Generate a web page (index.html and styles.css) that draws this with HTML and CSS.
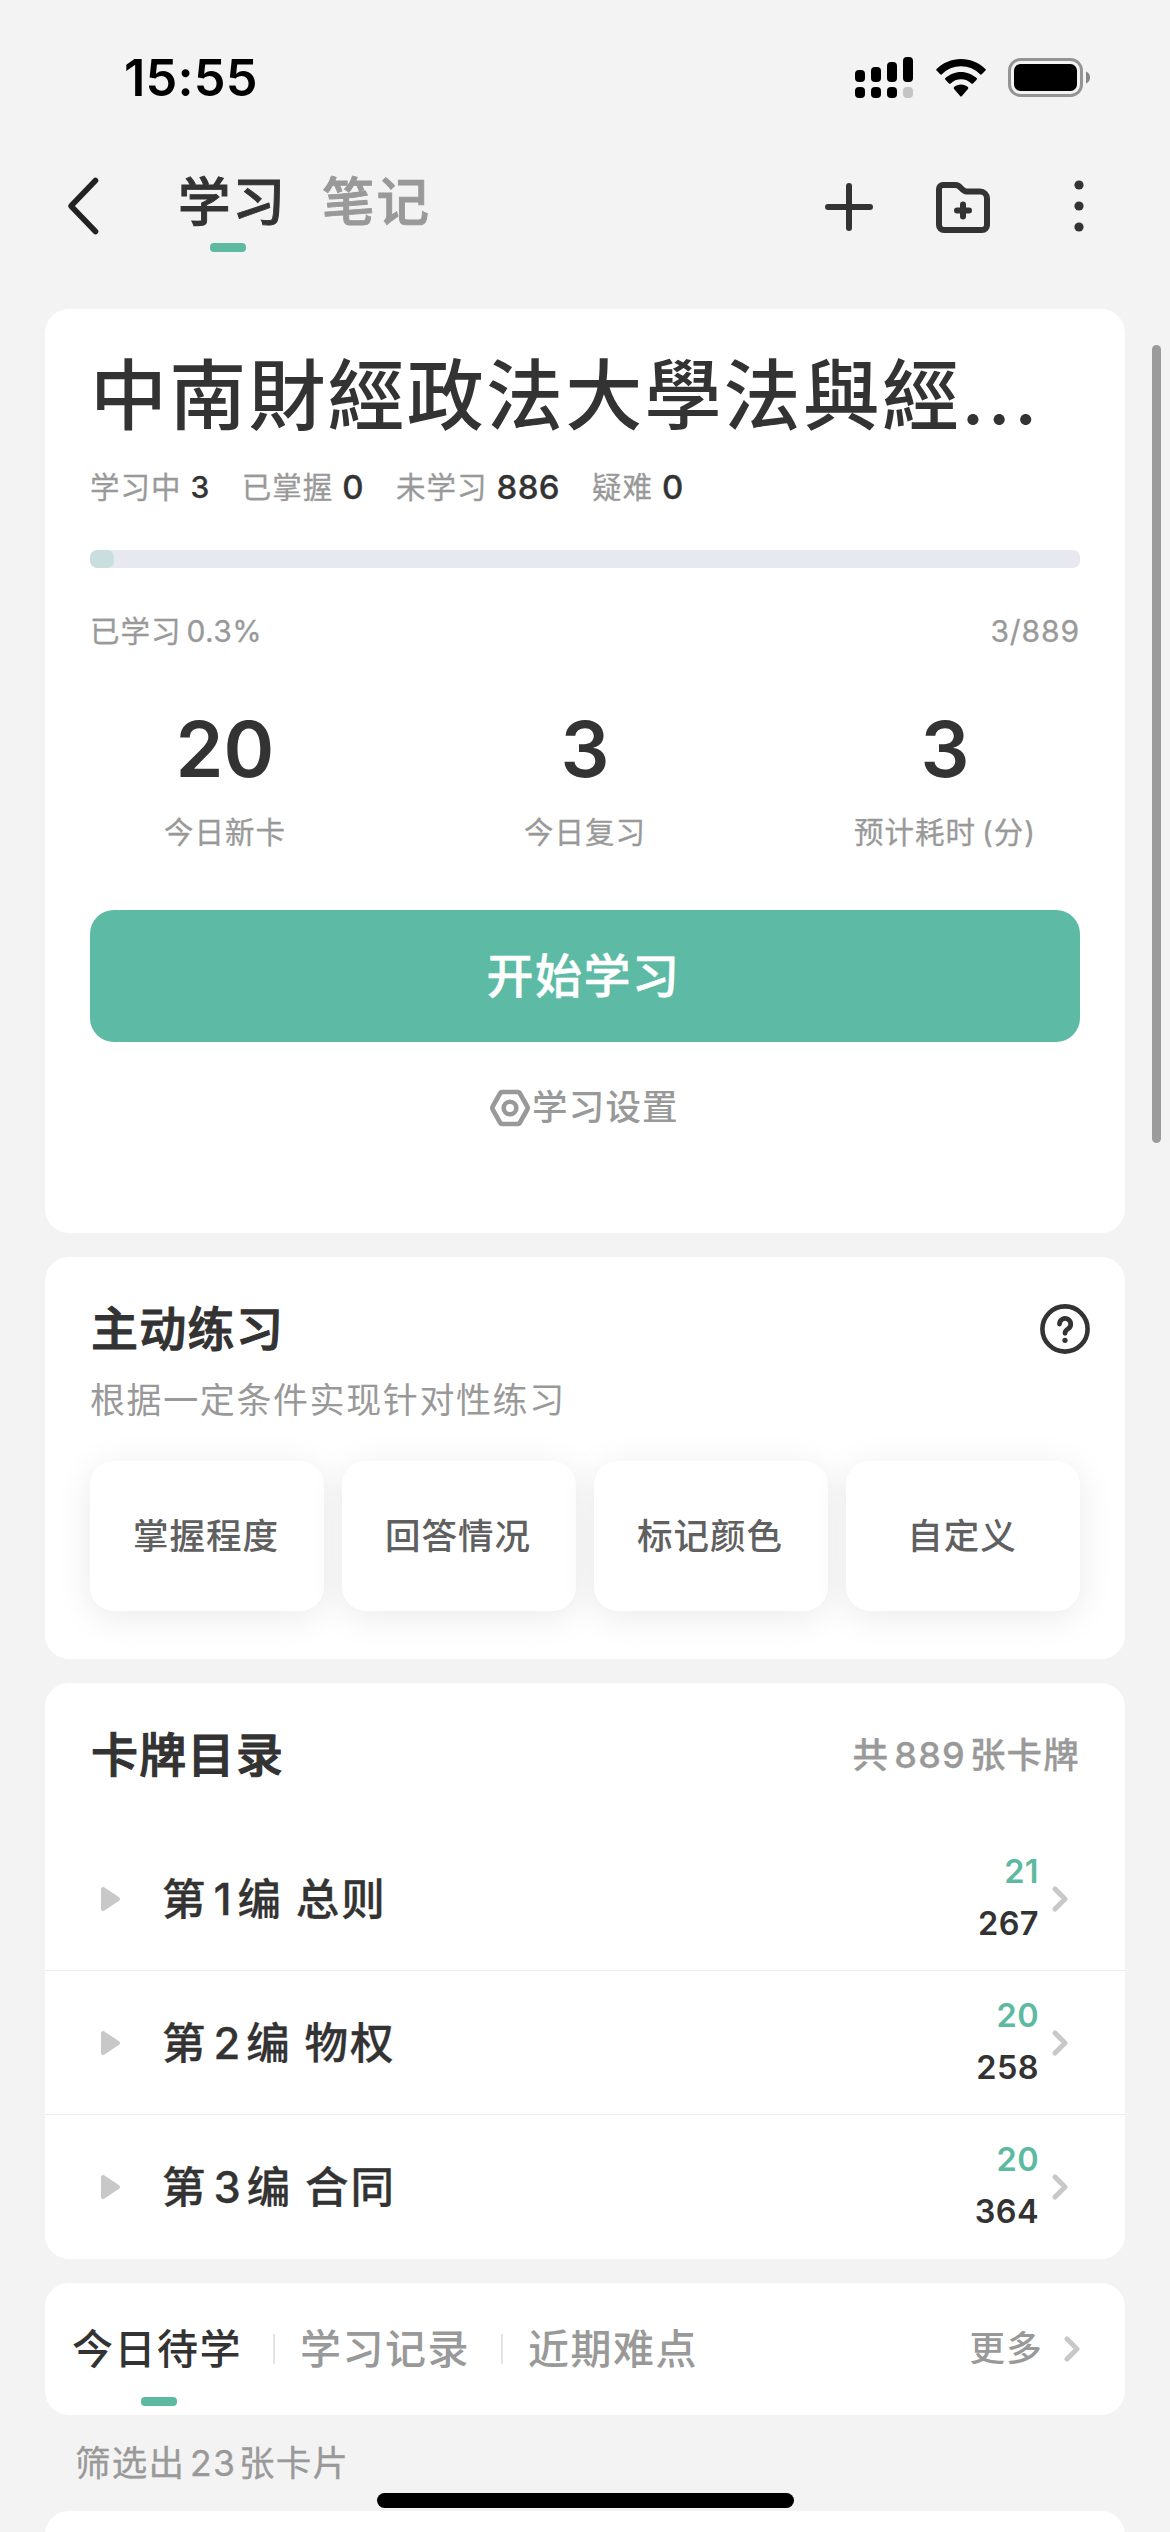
FILE: index.html
```html
<!DOCTYPE html>
<html lang="zh-CN">
<head>
<meta charset="utf-8">
<title>学习</title>
<link rel="stylesheet" href="styles.css">
</head>
<body>
<div class="screen">
  <header class="status">
    <span class="clock">15:55</span>
    <svg class="signal" viewBox="0 0 58 42" width="58" height="42">
      <rect x="0" y="13" width="10" height="12" rx="4"/><rect x="16" y="10" width="10" height="15" rx="4"/><rect x="32" y="5" width="10" height="20" rx="4"/><rect x="48" y="0" width="10" height="25" rx="4"/>
      <rect x="0" y="30" width="10" height="11" rx="4"/><rect x="16" y="30" width="10" height="11" rx="4"/><rect x="32" y="30" width="10" height="11" rx="4"/><rect x="48" y="30" width="10" height="11" rx="4" fill="#c4c4c4"/>
    </svg>
    <svg class="wifi" viewBox="0 0 50 38" width="50" height="38">
      <path d="M25 0C15.500 0 7 3.800 .6 9.900a1.200 1.200 0 0 0 0 1.700L4.200 15.200a1.200 1.200 0 0 0 1.700 0C11 10.300 17.600 7.300 25 7.300S39 10.300 44.100 15.200a1.200 1.200 0 0 0 1.700 0L49.400 11.600a1.200 1.200 0 0 0 0-1.700C43 3.800 34.500 0 25 0Z"/>
      <path d="M25 12.900c-6 0-11.500 2.400-15.600 6.200a1.200 1.200 0 0 0 0 1.700L13 24.400a1.200 1.200 0 0 0 1.700 0C17.400 21.900 21 20.300 25 20.300S32.600 21.900 35.300 24.400a1.200 1.200 0 0 0 1.700 0L40.600 20.800a1.200 1.200 0 0 0 0-1.700C36.500 15.300 31 12.900 25 12.900Z"/>
      <path d="M25 25.500c-2.700 0-5.100 1-6.900 2.600a1.200 1.200 0 0 0 0 1.800L24.100 36.900a1.200 1.200 0 0 0 1.800 0L31.900 29.900a1.200 1.200 0 0 0 0-1.800C30.100 26.500 27.700 25.500 25 25.500Z"/>
    </svg>
    <svg class="battery" viewBox="0 0 83 40" width="83" height="40">
      <rect x="1.500" y="1.500" width="72" height="36" rx="11" fill="none" stroke="#949494" stroke-width="3"/>
      <rect x="6" y="6" width="63" height="27" rx="6.500"/>
      <path d="M78 13.500c2.600.8 4 3.200 4 6s-1.400 5.200-4 6Z" fill="#858585"/>
    </svg>
  </header>

  <nav class="nav">
    <svg class="back" viewBox="0 0 34 60" width="34" height="60"><path d="M29.500 4.500 5 30 29.500 55.500" fill="none" stroke="#222" stroke-width="5.600" stroke-linecap="round" stroke-linejoin="round"/></svg>
    <div class="nav-tab active">学习</div>
    <div class="nav-tab">笔记</div>
    <svg class="plus" viewBox="0 0 48 48" width="48" height="48"><path d="M24 3V45M3 24H45" stroke="#333" stroke-width="6" stroke-linecap="round"/></svg>
    <svg class="folder" viewBox="0 0 54 52" width="54" height="52" fill="none" stroke="#333" stroke-width="6" stroke-linecap="round" stroke-linejoin="round"><path d="M3 7a4 4 0 0 1 4-4H19.500c5.500 0 6 6.500 11 6.500H44a7 7 0 0 1 7 7V43a5 5 0 0 1-5 5H8a5 5 0 0 1-5-5Z"/><path d="M27 22.500V34.500M21 28.500H33"/></svg>
    <svg class="dots" viewBox="0 0 10 54" width="10" height="54" fill="#333"><circle cx="5" cy="6" r="4.600"/><circle cx="5" cy="27" r="4.600"/><circle cx="5" cy="48" r="4.600"/></svg>
  </nav>

  <main class="cards">
    <section class="card deck">
      <h1 class="deck-title">中南財經政法大學法與經<span class="ellipsis">...</span></h1>
      <div class="counts">
        <span class="count">学习中<b class="small">3</b></span>
        <span class="count">已掌握<b>0</b></span>
        <span class="count">未学习<b>886</b></span>
        <span class="count">疑难<b>0</b></span>
      </div>
      <div class="bar"><div class="bar-fill"></div></div>
      <div class="progress-text"><span>已学习<i class="latin">0.3%</i></span><span class="ratio">3/889</span></div>
      <div class="today">
        <div class="metric"><strong>20</strong><span>今日新卡</span></div>
        <div class="metric"><strong>3</strong><span>今日复习</span></div>
        <div class="metric"><strong>3</strong><span>预计耗时<i class="paren">(</i>分<i>)</i></span></div>
      </div>
      <button class="start">开始学习</button>
      <div class="settings">
        <svg viewBox="0 0 40 38" width="40" height="38" fill="none" stroke="#999" stroke-width="4.600" stroke-linejoin="round"><path d="M12 3H28a2 2 0 0 1 1.700 1L37 17a3.500 3.500 0 0 1 0 4L29.700 34a2 2 0 0 1-1.700 1H12a2 2 0 0 1-1.700-1L3 21a3.500 3.500 0 0 1 0-4L10.300 4A2 2 0 0 1 12 3Z"/><circle cx="20" cy="19" r="6.300"/></svg>
        <span>学习设置</span>
      </div>
    </section>

    <section class="card practice">
      <div class="practice-head">
        <h2>主动练习</h2>
        <svg viewBox="0 0 50 50" width="50" height="50" fill="none" stroke="#333" stroke-linecap="round"><circle cx="25" cy="25" r="22.600" stroke-width="4.600"/><path d="M19.500 20a5.600 5.600 0 1 1 8.700 4.700c-2 1.300-3.200 2.300-3.200 4.600" stroke-width="4.800"/><circle cx="25" cy="36.300" r="2.600" fill="#333" stroke="none"/></svg>
      </div>
      <p class="desc">根据一定条件实现针对性练习</p>
      <div class="tiles">
        <div class="tile">掌握程度</div><div class="tile">回答情况</div><div class="tile">标记颜色</div><div class="tile">自定义</div>
      </div>
    </section>

    <section class="card catalog">
      <div class="catalog-head"><h2>卡牌目录</h2><span class="total">共<i>889</i>张卡牌</span></div>
      <div class="row">
        <svg class="tri" viewBox="0 0 20 26" width="20" height="26"><path d="M2 3v20l15-10Z"/></svg>
        <span class="name">第<i>1</i>编 总则</span>
        <span class="nums"><em>21</em><span>267</span></span>
        <svg class="chev" viewBox="0 0 16 26" width="16" height="26"><path d="M3 3 13 13 3 23"/></svg>
      </div>
      <div class="row">
        <svg class="tri" viewBox="0 0 20 26" width="20" height="26"><path d="M2 3v20l15-10Z"/></svg>
        <span class="name">第<i>2</i>编 物权</span>
        <span class="nums"><em>20</em><span>258</span></span>
        <svg class="chev" viewBox="0 0 16 26" width="16" height="26"><path d="M3 3 13 13 3 23"/></svg>
      </div>
      <div class="row">
        <svg class="tri" viewBox="0 0 20 26" width="20" height="26"><path d="M2 3v20l15-10Z"/></svg>
        <span class="name">第<i>3</i>编 合同</span>
        <span class="nums"><em>20</em><span>364</span></span>
        <svg class="chev" viewBox="0 0 16 26" width="16" height="26"><path d="M3 3 13 13 3 23"/></svg>
      </div>
    </section>

    <section class="card tabs">
      <span class="tab on">今日待学</span>
      <span class="sep"></span>
      <span class="tab">学习记录</span>
      <span class="sep"></span>
      <span class="tab">近期难点</span>
      <span class="more">更多</span>
      <svg class="chev more-chev" viewBox="0 0 16 26" width="16" height="26"><path d="M3 3 13 13 3 23"/></svg>
    </section>

    <p class="filtered">筛选出<i>23</i>张卡片</p>
    <section class="card next"></section>
  </main>

  <div class="scrollbar"></div>
  <div class="home"></div>
</div>
</body>
</html>
```
FILE: styles.css
```css
* { box-sizing: border-box; margin: 0; padding: 0; }
body { background: #f3f3f3; }
i, em { font-style: normal; }
svg { display: block; flex: none; }
.screen {
  position: relative; width: 1170px; height: 2532px; overflow: hidden;
  background: #f3f3f3; color: #333; white-space: nowrap;
  font-family: Inter, "Noto Sans CJK SC", sans-serif;
}

.status { display: flex; align-items: flex-start; height: 144px; padding: 57px 79px 0 124px; }
.clock { width: 732px; font-size: 50.500px; line-height: 42px; font-weight: 600; color: #000; letter-spacing: .2px; }
.wifi { margin: 2px 0 0 22.500px; }
.battery { margin: 1px 0 0 22.500px; }

.nav { display: flex; align-items: flex-start; height: 165px; padding-left: 66px; }
.back { margin-top: 32px; }
.nav-tab { position: relative; height: 108px; line-height: 116px; font-size: 52.500px; letter-spacing: 2px; font-weight: 500; -webkit-text-stroke: .9px; color: #999; width: 108px; margin-left: 36px; }
.nav-tab.active { color: #333; margin-left: 78px; }
.nav-tab.active::after { content: ""; position: absolute; left: 32px; top: 99px; width: 36px; height: 9px; border-radius: 4px; background: #5dbaa0; }
.plus { margin: 39px 0 0 395px; }
.folder { margin: 38px 0 0 63px; }
.dots { margin: 34.500px 0 0 83.500px; }

.cards { padding: 0 45px; }
.card { background: #fff; border-radius: 24px; }

.deck { height: 924px; padding: 34px 45px 0; margin-bottom: 24px; }
.deck-title { height: 105px; line-height: 106px; font-size: 77px; letter-spacing: 2.200px; font-weight: 500; }
.ellipsis { letter-spacing: 3px; }
.counts { display: flex; align-items: center; height: 78px; gap: 32px; line-height: 42px; }
.count { display: flex; align-items: center; font-size: 29.500px; letter-spacing: 1px; color: #999; -webkit-text-stroke: .3px; }
.count b { margin-left: 9px; font-size: 33px; letter-spacing: .4px; font-weight: 500; color: #333; }
.count b.small { font-size: 30px; }
.bar { margin-top: 24px; height: 18px; border-radius: 7px; background: #e8e9f0; overflow: hidden; }
.bar-fill { width: 24px; height: 18px; border-radius: 7px; background: #c8dfde; }
.progress-text { display: flex; justify-content: space-between; margin-top: 40px; height: 46px; line-height: 46px; font-size: 29.500px; letter-spacing: 1px; color: #999; -webkit-text-stroke: .3px; }
.latin { margin-left: 5px; font-size: 30px; letter-spacing: .4px; }
.ratio { font-size: 30px; letter-spacing: .9px; }
.today { display: flex; height: 256px; margin: 0 -45px; padding-top: 51px; }
.metric { flex: 1; display: flex; flex-direction: column; align-items: center; }
.metric strong { font-size: 77px; line-height: 88px; font-weight: 600; }
.metric span { margin-top: 16px; line-height: 46px; font-size: 29.500px; letter-spacing: 1px; color: #999; -webkit-text-stroke: .3px; }
.paren { margin-left: 6px; }
.start { display: block; width: 990px; height: 132px; border: 0; border-radius: 24px; background: #5dbaa4; color: #fff; font: 500 47px/132px Inter, "Noto Sans CJK SC", sans-serif; letter-spacing: 1.500px; text-indent: -3px; -webkit-text-stroke: .5px; }
.settings { display: flex; align-items: center; height: 48px; margin-top: 42px; padding-left: 400px; gap: 2px; font-size: 35.500px; line-height: 48px; letter-spacing: 1.200px; font-weight: 500; color: #999; }

.practice { height: 402px; margin-bottom: 24px; padding: 42px 45px 0; }
h2 { font-size: 47px; line-height: 62px; font-weight: 500; -webkit-text-stroke: 1.100px; letter-spacing: 1.300px; padding-left: 1px; }
.practice-head { display: flex; justify-content: space-between; align-items: center; height: 60px; margin-right: -10px; }
.desc { margin-top: 16px; height: 48px; line-height: 50px; font-size: 35px; letter-spacing: 1.600px; color: #999; }
.tiles { display: grid; grid-template-columns: repeat(4, 1fr); gap: 18px; margin-top: 38px; }
.tile { height: 150px; line-height: 152px; border-radius: 24px; background: #fff; box-shadow: 0 6px 36px rgba(0,0,0,.085); text-align: center; text-indent: -2px; font-size: 35.500px; letter-spacing: 1px; font-weight: 500; color: #606060; }

.catalog { height: 576px; margin-bottom: 24px; }
.catalog-head { display: flex; justify-content: space-between; align-items: center; height: 144px; padding: 0 45px; }
.total { font-size: 35.500px; line-height: 48px; letter-spacing: 1.200px; font-weight: 500; color: #999; -webkit-text-stroke: .3px; }
.total i { margin: 0 4px 0 5px; font-size: 36px; }
.row { display: flex; align-items: center; height: 144px; padding: 0 57px 0 56px; border-bottom: 1px solid #ececec; }
.row:last-child { border-bottom: 0; }
.tri path { fill: #c8c8c8; stroke: #c8c8c8; stroke-width: 4; stroke-linejoin: round; }
.name { margin-left: 41px; font-size: 43.500px; line-height: 60px; letter-spacing: 2px; word-spacing: -1px; font-weight: 500; -webkit-text-stroke: .3px; }
.name i { margin: 0 4px 0 6px; }
.nums { display: flex; flex-direction: column; flex: 1; text-align: right; font-size: 32.500px; line-height: 52px; font-weight: 600; letter-spacing: .4px; position: relative; top: -1px; }
.nums em { color: #5dbaa0; }
.chev { margin-left: 13px; }
.chev path { fill: none; stroke: #c8c8c8; stroke-width: 5; stroke-linecap: round; stroke-linejoin: round; }

.tabs { display: flex; align-items: center; height: 132px; padding: 0 45px 0 27px; }
.tab { position: relative; font-size: 41px; line-height: 60px; letter-spacing: 1.500px; font-weight: 500; color: #999; }
.tab.on { color: #333; }
.tab.on::after { content: ""; position: absolute; left: 69px; top: 78px; width: 36px; height: 9px; border-radius: 4px; background: #5dbaa0; }
.sep { width: 2px; height: 30px; margin: 0 25px 0 31px; background: #e3e3e3; }
.more { margin-left: auto; font-size: 35.500px; line-height: 48px; letter-spacing: 1.300px; font-weight: 500; color: #999; }
.more-chev { margin-left: 21px; }
.filtered { height: 96px; line-height: 98px; padding-left: 30px; font-size: 35.500px; letter-spacing: 1.200px; color: #999; -webkit-text-stroke: .3px; }
.filtered i { margin: 0 3px 0 5px; }
.next { height: 60px; }

.scrollbar { position: absolute; left: 1152px; top: 345px; width: 9px; height: 798px; border-radius: 5px; background: #9b9b9b; }
.home { position: absolute; left: 377px; top: 2493px; width: 417px; height: 15px; border-radius: 8px; background: #000; }
```
